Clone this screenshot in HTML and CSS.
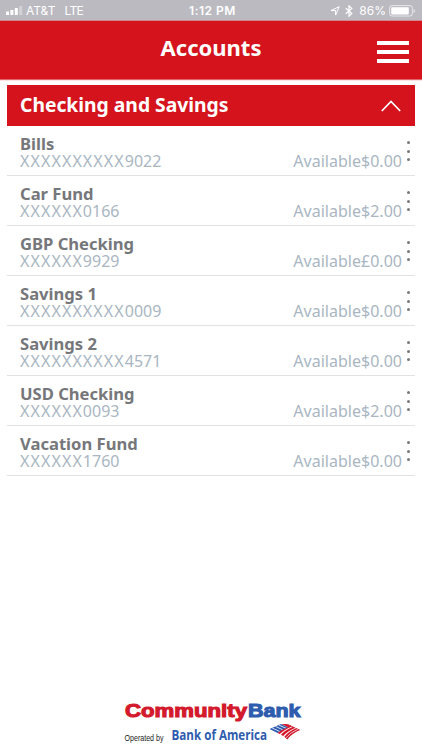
FILE: index.html
```html
<!DOCTYPE html>
<html lang="en">
<head>
<meta charset="utf-8">
<meta name="viewport" content="width=device-width, initial-scale=1">
<title>Accounts</title>
<link rel="stylesheet" href="styles.css">
</head>
<body>
<div class="status">
  <div class="status-left">
    <svg class="signal" width="17" height="10" viewBox="0 0 17 10" fill="#fff"><rect x="0" y="5.5" width="3" height="3.5" rx=".6"/><rect x="4.4" y="4" width="3" height="5" rx=".6"/><rect x="8.8" y="2" width="3" height="7" rx=".6"/><rect x="13.2" y="0" width="3" height="9" rx=".6" opacity=".35"/></svg>
    <span class="carrier">AT&amp;T</span><span class="network">LTE</span>
  </div>
  <div class="clock">1:12 PM</div>
  <div class="status-right">
    <svg width="10" height="10" viewBox="0 0 10 10" fill="none" stroke="#fff" stroke-width="1" stroke-linejoin="round"><path d="M9.2.7 5.6 9.1V4.6H.9z"/></svg>
    <svg class="bt" width="8" height="12" viewBox="0 0 8 12" fill="none" stroke="#fff" stroke-width="1.2"><path d="M.8 3.3 6.8 8.6 4 11.2V.8l2.8 2.6L.8 8.7"/></svg>
    <span class="percent">86%</span>
    <svg class="battery" width="27" height="12" viewBox="0 0 27 12"><rect x=".6" y=".6" width="22.8" height="10.4" rx="2.4" fill="none" stroke="#fff" stroke-opacity=".65"/><rect x="2.2" y="2.2" width="17.6" height="7.2" rx=".8" fill="#fff"/><path d="M24.6 4v4q1.6-.6 1.6-2t-1.6-2" fill="#fff" opacity=".6"/></svg>
  </div>
</div>
<header class="header">
  <h1>Accounts</h1>
  <div class="menu"><i></i><i></i><i></i></div>
</header>
<main class="content">
  <section class="group">
    <h2>Checking and Savings</h2>
    <svg width="20" height="12" viewBox="0 0 20 12" fill="none" stroke="#fff" stroke-width="1.7"><path d="M.8 11 10 1.5 19.2 11"/></svg>
  </section>
  <ul class="list">
    <li class="row"><div class="info"><div class="name">Bills</div><div class="number"><span class="mask">XXXXXXXXXX</span>9022</div></div><div class="balance"><span class="label">Available</span>$0.00</div><div class="dots"><i></i><i></i><i></i></div></li>
    <li class="row"><div class="info"><div class="name">Car Fund</div><div class="number"><span class="mask">XXXXXX</span>0166</div></div><div class="balance"><span class="label">Available</span>$2.00</div><div class="dots"><i></i><i></i><i></i></div></li>
    <li class="row"><div class="info"><div class="name">GBP Checking</div><div class="number"><span class="mask">XXXXXX</span>9929</div></div><div class="balance"><span class="label">Available</span>£0.00</div><div class="dots"><i></i><i></i><i></i></div></li>
    <li class="row"><div class="info"><div class="name">Savings 1</div><div class="number"><span class="mask">XXXXXXXXXX</span>0009</div></div><div class="balance"><span class="label">Available</span>$0.00</div><div class="dots"><i></i><i></i><i></i></div></li>
    <li class="row"><div class="info"><div class="name">Savings 2</div><div class="number"><span class="mask">XXXXXXXXXX</span>4571</div></div><div class="balance"><span class="label">Available</span>$0.00</div><div class="dots"><i></i><i></i><i></i></div></li>
    <li class="row"><div class="info"><div class="name">USD Checking</div><div class="number"><span class="mask">XXXXXX</span>0093</div></div><div class="balance"><span class="label">Available</span>$2.00</div><div class="dots"><i></i><i></i><i></i></div></li>
    <li class="row"><div class="info"><div class="name">Vacation Fund</div><div class="number"><span class="mask">XXXXXX</span>1760</div></div><div class="balance"><span class="label">Available</span>$0.00</div><div class="dots"><i></i><i></i><i></i></div></li>
  </ul>
</main>
<footer class="footer">
  <svg width="178" height="44" viewBox="0 0 178 44">
    <g class="brand"><text x="1" y="17" textLength="122" lengthAdjust="spacingAndGlyphs" fill="#d3192b" stroke="#d3192b">Community</text><text x="124" y="17" textLength="52.5" lengthAdjust="spacingAndGlyphs" fill="#2e5cae" stroke="#2e5cae">Bank</text></g>
    <text class="operated" x="0.5" y="40.5" textLength="39" lengthAdjust="spacingAndGlyphs">Operated by</text>
    <text class="boa" x="47.5" y="40" textLength="95.5" lengthAdjust="spacingAndGlyphs">Bank of America</text>
    <g transform="translate(145.5 24)">
      <path d="M0 5 11.5 0 19 3.4 8 9z" fill="#2e5cae"/>
      <path d="M2.6 3.9 10.5 7.7M6 2.4 13.8 6.1M9.3 1 17 4.5" stroke="#fff" stroke-width=".8"/>
      <path d="M12 0 17.5 0 22.4 2.4Q14 6 10.3 10L8 8.9Q12 5.5 18.6 3.2z" fill="#d3192b"/>
      <path d="M19.5.6 26 3.7Q18 7 13.8 12L11.4 10.7Q15.5 6.5 23 3.1L18.4.7z" fill="#d3192b"/>
      <path d="M26.8 4.1 30.8 6Q22.5 9.3 17.8 15.4L14.8 12.8Q19.5 7.3 26.8 4.1z" fill="#d3192b"/>
      <path d="M16.3 14Q21 8.3 28.6 5" fill="none" stroke="#fff" stroke-width=".7"/>
    </g>
  </svg>
</footer>
</body>
</html>
```
FILE: styles.css
```css
* { box-sizing: border-box; }
body {
  margin: 0;
  height: 750px;
  display: flex;
  flex-direction: column;
  background: #fff;
  font-family: "Noto Sans", sans-serif;
  overflow: hidden;
}
h1, h2, ul { margin: 0; padding: 0; }
.status {
  height: 21px;
  background: #bbbac1;
  color: #fff;
  display: grid;
  grid-template-columns: 1fr auto 1fr;
  align-items: center;
  padding: 1px 6px 0;
  font: 12px/20px Inter, sans-serif;
  border-bottom: 1px solid #d5868f;
}
.status-left, .status-right { display: flex; align-items: center; }
.carrier { margin-left: 3px; }
.network { margin-left: 9px; letter-spacing: -.6px; }
.clock { font-weight: 600; letter-spacing: .5px; padding-left: 3px; }
.status-right { justify-content: flex-end; }
.bt { margin-left: 5px; }
.percent { margin: 0 3px 0 6px; }
.header {
  height: 59px;
  background: #d4131d;
  border-bottom: 1px solid #e2656c;
  display: grid;
  grid-template-columns: 1fr auto 1fr;
  align-items: center;
  padding: 0 13px;
  color: #fff;
}
.header h1 { grid-column: 2; font-size: 22px; line-height: 30px; padding-bottom: 6px; }
.menu { justify-self: end; display: flex; flex-direction: column; gap: 5px; width: 32px; padding-top: 4px; }
.menu i { height: 4px; background: #fff; }
.content { flex: 1; padding: 4px 7px 0; border-top: 1px solid #ffe0e0; }
.group {
  height: 41px;
  background: #d4131d;
  color: #fff;
  display: flex;
  align-items: center;
  justify-content: space-between;
  padding: 0 14px 0 13px;
}
.group h2 { font-size: 19.3px; line-height: 30px; padding-bottom: 1px; }
.list { list-style: none; }
.row {
  height: 50px;
  border-bottom: 1px solid #e2e2e4;
  display: flex;
  padding: 0 5px 0 13px;
}
.info { flex: 1; padding-top: 8px; }
.name { font-size: 16.6px; line-height: 19px; font-weight: 700; color: #76777b; }
.number, .balance { font-size: 16px; line-height: 17px; color: #a9b6c2; }
.mask { letter-spacing: 1.1px; }
.balance { padding-top: 27px; letter-spacing: .02px; }
.dots { display: flex; flex-direction: column; gap: 5.6px; padding-top: 15px; margin-left: 5px; }
.dots i { width: 3px; height: 3px; border-radius: 50%; background: #77787b; }
.footer { padding-left: 124px; height: 50px; }
.footer svg { display: block; overflow: visible; }
.brand { font: bold 19px "Liberation Sans", sans-serif; stroke-width: 1.1px; }
.operated { font: 8.5px "Liberation Sans", sans-serif; fill: #222; }
.boa { font: bold 15px "Open Sans", sans-serif; fill: #2e5cae; }
```
